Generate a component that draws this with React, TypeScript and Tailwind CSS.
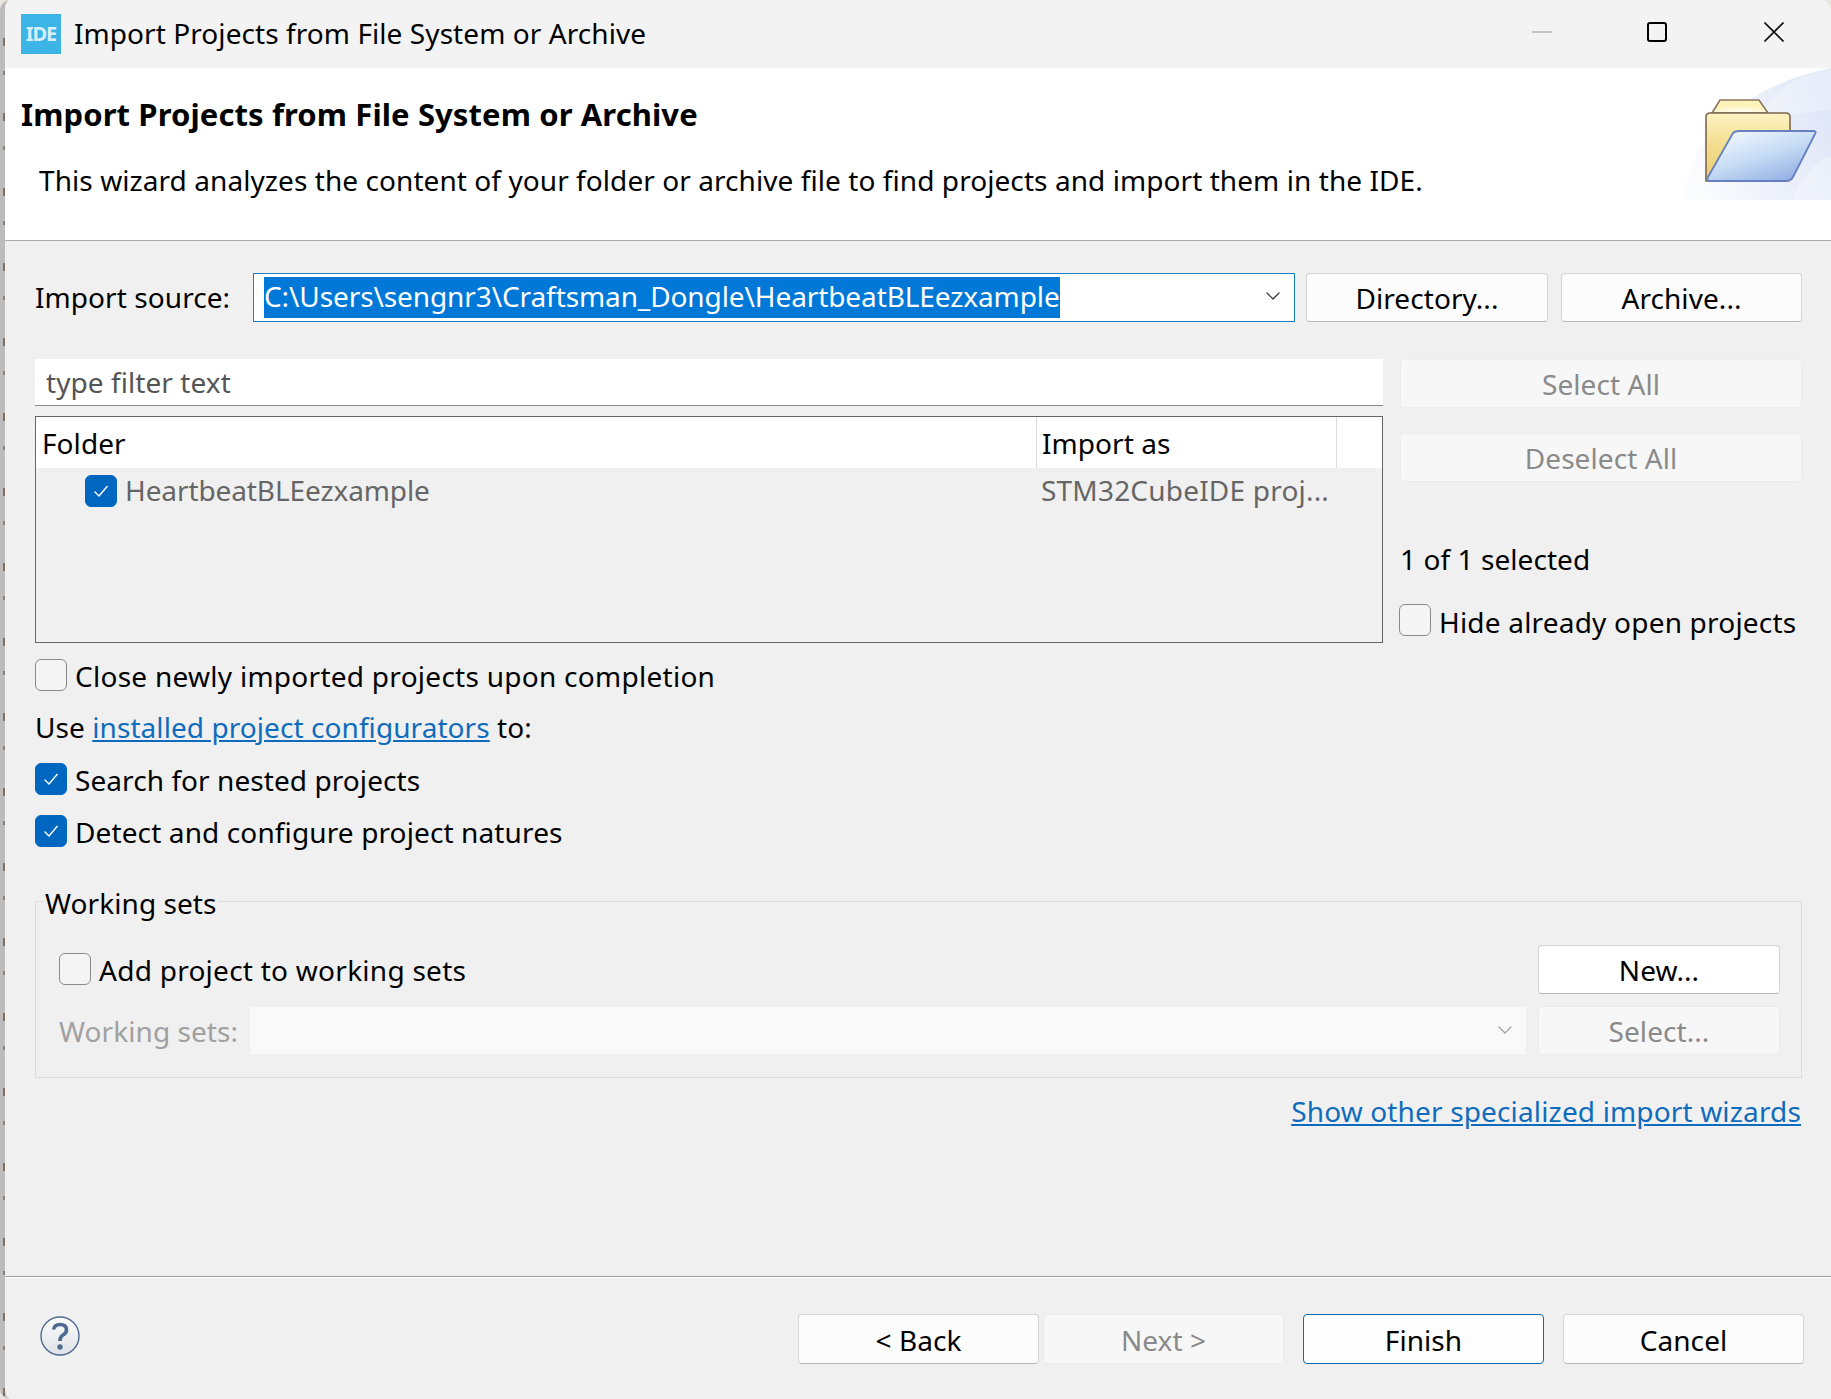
import React from "react";
import { ChevronDown } from "lucide-react";

const Check = ({ on, x = "" }: { on?: boolean; x?: string }) => (
  <span
    className={`flex h-[32px] w-[32px] shrink-0 items-center justify-center rounded-[6px] border ${
      on ? "border-[#0067c0] bg-[#0067c0]" : "border-[#8a8a8a] bg-[#f4f4f4]"
    } ${x}`}
  >
    {on && (
      <svg width="18" height="18" viewBox="0 0 18 18" fill="none" stroke="#ffffff" strokeWidth="1.4">
        <path d="M2.5 9.5 L7 14 L15.5 4" />
      </svg>
    )}
  </span>
);

const Btn = ({ label, off, focus, x = "" }: { label: string; off?: boolean; focus?: boolean; x?: string }) => (
  <button
    className={`flex h-[49px] items-center justify-center rounded-[4px] border pt-[1px] ${
      off
        ? "border-[#ececec] bg-[#f7f7f7] text-[#8a8a8a]"
        : focus
          ? "border-[#0f6cb0] bg-[#fdfdfd] text-black"
          : "border-[#d4d4d4] border-b-[#b8b8b8] bg-[#fcfcfc] text-black"
    } ${x}`}
  >
    {label}
  </button>
);

const FolderBanner = () => (
  <svg className="absolute right-0 top-0" width="148" height="132" viewBox="0 0 148 132">
    <defs>
      <linearGradient id="bannerBg" x1="0" y1="0.6" x2="1" y2="0.3">
        <stop offset="0" stopColor="#fbfcfe" />
        <stop offset="1" stopColor="#dfe6f7" />
      </linearGradient>
      <linearGradient id="back" x1="0" y1="0" x2="0" y2="1">
        <stop offset="0" stopColor="#fdf3c2" />
        <stop offset="0.5" stopColor="#f3dc8c" />
        <stop offset="1" stopColor="#e9cb70" />
      </linearGradient>
      <linearGradient id="front" x1="0.15" y1="0" x2="0.85" y2="1">
        <stop offset="0" stopColor="#f4faff" />
        <stop offset="0.5" stopColor="#c6dbf5" />
        <stop offset="1" stopColor="#8dabdf" />
      </linearGradient>
      <radialGradient id="shine" cx="0.5" cy="1" r="0.6">
        <stop offset="0" stopColor="#ffffff" />
        <stop offset="1" stopColor="#fdf3b8" />
      </radialGradient>
    </defs>
    <path d="M0 132 C6 70 60 18 148 0 L148 132 Z" fill="url(#bannerBg)" />
    <path d="M70 60 C95 48 120 44 148 42 L148 0 C110 8 90 22 70 60 Z" fill="#ffffff" opacity="0.25" />
    <path d="M110 132 C118 110 130 94 148 88 L148 132 Z" fill="#ffffff" opacity="0.3" />
    <path d="M29 45 L37 32 L76 32 L85 45 Z" fill="url(#shine)" stroke="#8a7560" strokeWidth="1.6" />
    <path
      d="M23 113 L23 49 Q23 45 27 45 L103 45 Q107 45 107 49 L107 90 L30 113 Z"
      fill="url(#back)"
      stroke="#7d6650"
      strokeWidth="1.6"
    />
    <path
      d="M50 65 Q52 63 56 63 L130 63 Q134 63 132 66 L110 109 Q108 113 103 113 L27 113 Q23 113 25 109 Z"
      fill="url(#front)"
      stroke="#6580c0"
      strokeWidth="1.8"
    />
  </svg>
);

const HelpIcon = () => (
  <svg width="40" height="40" viewBox="0 0 40 40" fill="none">
    <defs>
      <linearGradient id="help" x1="0" y1="0" x2="0" y2="1">
        <stop offset="0" stopColor="#fbfbfc" />
        <stop offset="1" stopColor="#dfe2e7" />
      </linearGradient>
    </defs>
    <circle cx="20" cy="20" r="19" fill="url(#help)" stroke="#4d6a90" strokeWidth="1.4" />
    <path d="M13.5 13.5 Q14.5 8.5 20 8.5 Q26.5 8.5 26.5 14 Q26.5 17 23 19 Q20 20.5 20 25" stroke="#4d6a90" strokeWidth="3.6" />
    <circle cx="20" cy="31" r="2.7" fill="#4d6a90" />
  </svg>
);

export default function App() {
  return (
    <div
      className="relative flex h-[1399px] w-[1831px] overflow-hidden bg-[#e9e6e2] text-[28px] leading-[36px] tracking-[0.07px] text-black"
      style={{ fontFamily: '"Noto Sans", sans-serif' }}
    >
      <div className="relative flex h-full w-full flex-col overflow-hidden rounded-tr-[10px] rounded-bl-[10px] rounded-tl-[10px] border-l-[5px] border-[#bcbcbc] bg-[#f0f0f0]">
        {/* title bar */}
        <div className="flex h-[68px] shrink-0 items-center bg-[#f3f3f3] pl-[16px]">
          <div className="flex h-[40px] w-[40px] items-center justify-center bg-[#3db4e6] text-[20px] font-bold tracking-[-1px] text-[#d8f0fb]">
            IDE
          </div>
          <span className="mb-[3px] ml-[13px]">Import Projects from File System or Archive</span>
          <div className="mb-[4px] ml-auto flex items-center">
            <span className="h-[2px] w-[20px] bg-[#c4c4c4]" />
            <span className="ml-[95px] h-[20px] w-[20px] rounded-[3px] border-2 border-black" />
            <svg className="ml-[97px] mr-[47px]" width="20" height="20" viewBox="0 0 20 20" stroke="#111111" strokeWidth="1.6">
              <path d="M0.5 0.5 L19.5 19.5 M19.5 0.5 L0.5 19.5" />
            </svg>
          </div>
        </div>

        {/* header */}
        <div className="relative h-[173px] shrink-0 border-b border-[#a8a8a8] bg-white pl-[16px]">
          <div className="pt-[28px] text-[31px] font-bold tracking-[0.1px]">Import Projects from File System or Archive</div>
          <div className="ml-[18px] mt-[30px]">
            This wizard analyzes the content of your folder or archive file to find projects and import them in the IDE.
          </div>
          <FolderBanner />
        </div>

        {/* import source */}
        <div className="ml-[30px] mt-[31px] flex h-[50px] shrink-0 items-center">
          <span className="w-[218px]">Import source:</span>
          <div className="relative flex h-[49px] w-[1042px] items-center border border-[#1a7fc4] bg-white pl-[10px]">
            <span className="flex h-[41px] w-[796px] items-center bg-[#0078d7] pb-[2px] tracking-[-0.1px] text-white">
              C:\Users\sengnr3\Craftsman_Dongle\HeartbeatBLEezxample
            </span>
            <ChevronDown className="absolute right-[9px] top-[10px] text-[#333333]" size={24} strokeWidth={1.2} />
          </div>
          <Btn label="Directory..." x="ml-[11px] w-[242px]" />
          <Btn label="Archive..." x="ml-[13px] w-[241px]" />
        </div>

        {/* filter + table + side buttons */}
        <div className="ml-[30px] mt-[37px] flex shrink-0">
          <div className="w-[1348px]">
            <div className="flex h-[47px] items-center border-b border-[#8a8a8a] bg-white pl-[11px] text-[#555555]">type filter text</div>
            <div className="mt-[10px] h-[227px] border border-[#666666]">
              <div className="flex h-[51px] bg-white">
                <div className="w-[1000px] pl-[6px] pt-[8px]">Folder</div>
                <div className="w-[300px] border-l border-[#dcdcdc] pl-[5px] pt-[8px]">Import as</div>
                <div className="flex-1 border-l border-[#dcdcdc]" />
              </div>
              <div className="flex h-[40px] items-center text-[#666666]">
                <div className="flex w-[1000px] items-center pl-[49px]">
                  <Check on x="mt-[6px]" />
                  <span className="ml-[8px] pt-[4px] tracking-[-0.1px]">HeartbeatBLEezxample</span>
                </div>
                <span className="pl-[5px] pt-[4px] tracking-[0.2px]">STM32CubeIDE proj...</span>
              </div>
            </div>
          </div>
          <div className="ml-[17px] w-[402px]">
            <Btn label="Select All" off x="w-full" />
            <Btn label="Deselect All" off x="mt-[25px] w-full" />
            <div className="mt-[59px]">1 of 1 selected</div>
            <div className="-ml-[1px] mt-[27px] flex h-[32px] items-center">
              <Check />
              <span className="ml-[8px] pt-[4px] tracking-[0.2px]">Hide already open projects</span>
            </div>
          </div>
        </div>

        {/* options */}
        <div className="ml-[30px] mt-[16px] flex h-[32px] shrink-0 items-center">
          <Check />
          <span className="ml-[8px] pt-[2px] tracking-[0.27px]">Close newly imported projects upon completion</span>
        </div>
        <div className="ml-[30px] mt-[18px] h-[36px] shrink-0">
          Use <a className="text-[#0f6cbd] underline">installed project configurators</a> to:
        </div>
        <div className="ml-[30px] mt-[18px] flex h-[32px] shrink-0 items-center">
          <Check on />
          <span className="ml-[8px] pt-[1px]">Search for nested projects</span>
        </div>
        <div className="ml-[30px] mt-[20px] flex h-[32px] shrink-0 items-center">
          <Check on />
          <span className="ml-[8px] pt-[1px] tracking-[0.12px]">Detect and configure project natures</span>
        </div>

        {/* working sets */}
        <div className="relative ml-[30px] mt-[54px] h-[177px] w-[1767px] shrink-0 border border-[#dcdcdc] pl-[23px] pr-[21px]">
          <span className="absolute left-[8px] top-[-17px] bg-[#f0f0f0] px-[1px]">Working sets</span>
          <div className="mt-[42px] flex h-[50px] items-center justify-between">
            <div className="flex h-[32px] items-center">
              <Check />
              <span className="ml-[8px] pt-[1px] tracking-[0.26px]">Add project to working sets</span>
            </div>
            <Btn label="New..." x="w-[242px] !bg-white" />
          </div>
          <div className="mt-[12px] flex items-center">
            <span className="w-[191px] text-[#a0a0a0]">Working sets:</span>
            <div className="relative h-[47px] w-[1276px] bg-[#f9f9f9]">
              <ChevronDown className="absolute right-[9px] top-[11px] text-[#a0a0a0]" size={24} strokeWidth={1.2} />
            </div>
            <Btn label="Select..." off x="ml-[12px] w-[242px]" />
          </div>
        </div>

        <div className="mr-[30px] mt-[15px] shrink-0 self-end tracking-[0.15px] text-[#0f6cbd] underline">Show other specialized import wizards</div>

        {/* footer */}
        <div className="mt-auto h-[123px] shrink-0 border-t border-[#a0a0a0] shadow-[inset_0_1px_0_#ffffff]">
          <div className="flex items-start pl-[35px] pr-[27px]">
            <div className="mt-[39px]">
              <HelpIcon />
            </div>
            <div className="ml-auto mt-[37px] flex">
              <Btn label="< Back" x="h-[50px] w-[241px]" />
              <Btn label="Next >" off x="ml-[4px] h-[50px] w-[241px]" />
              <Btn label="Finish" focus x="ml-[19px] h-[50px] w-[241px]" />
              <Btn label="Cancel" x="ml-[19px] h-[50px] w-[241px]" />
            </div>
          </div>
        </div>
      </div>
      {/* window behind shows through along the left edge */}
      <div className="absolute left-[3px] top-0 h-full w-[2px] bg-[repeating-linear-gradient(180deg,transparent_0,transparent_38px,#5a3d22_38px,#5a3d22_46px,transparent_46px,transparent_71px,#6d5a48_71px,#6d5a48_75px)] opacity-60" />
    </div>
  );
}
